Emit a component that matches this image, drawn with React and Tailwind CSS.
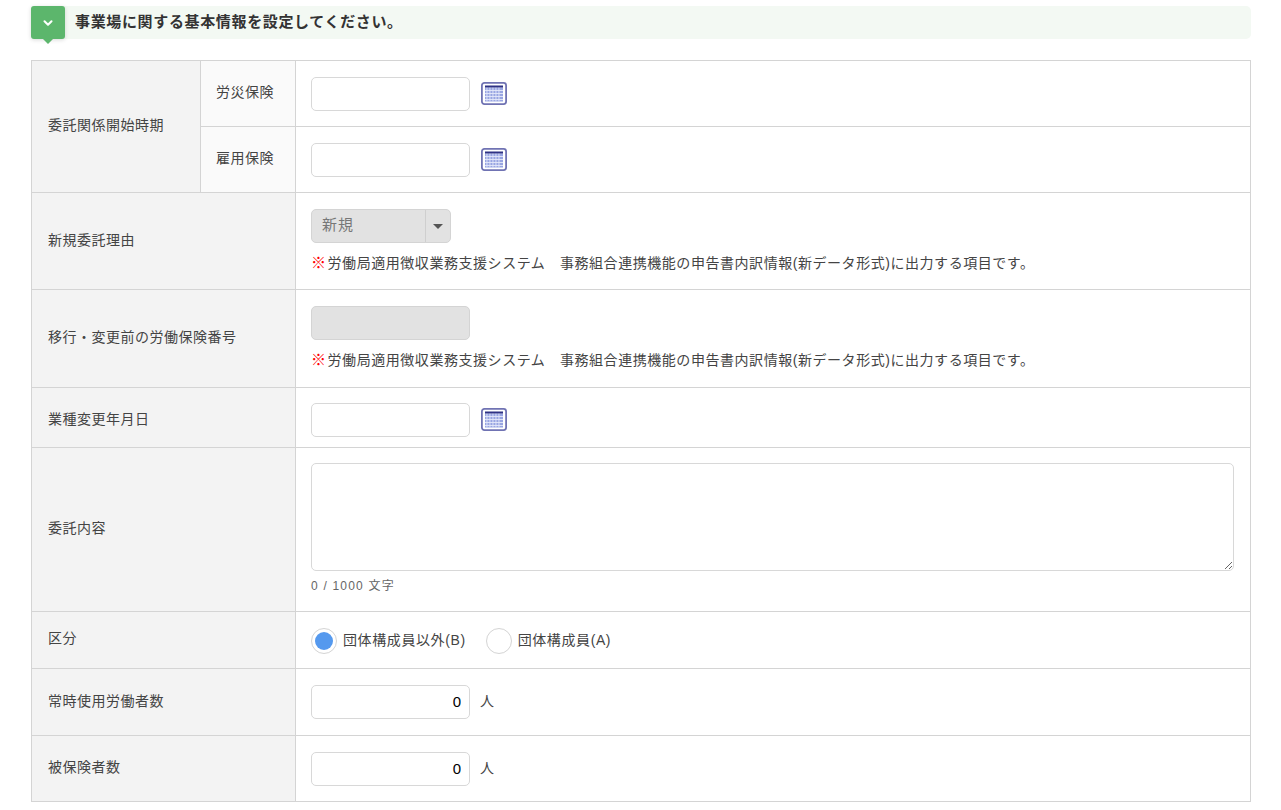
import { ChevronDown } from 'lucide-react';

const NOTE = '労働局適用徴収業務支援システム　事務組合連携機能の申告書内訳情報(新データ形式)に出力する項目です。';

function CalendarIcon() {
  const cols = [5.5, 8.5, 11.5, 14.5, 17.5];
  const rows = [8, 11, 14, 17];
  return (
    <svg width="26" height="23" viewBox="0 0 26 23" className="mb-[2px] ml-[11px] shrink-0">
      <rect x="0.9" y="0.9" width="24.2" height="21.2" rx="2.5" fill="#fff" stroke="#7073b3" strokeWidth="1.8" />
      <rect x="4" y="3.5" width="18" height="2.2" fill="#2f3284" />
      <rect x="4" y="5.7" width="18" height="13.8" fill="#98a5e2" />
      {cols.map((x) => (
        <rect key={x} x={x} y="5.7" width="0.9" height="13.8" fill="#e4e8fa" />
      ))}
      {rows.map((y) => (
        <rect key={y} x="4" y={y} width="18" height="0.9" fill="#e4e8fa" />
      ))}
    </svg>
  );
}

function DateField() {
  return (
    <div className="flex items-center">
      <input className="h-[34px] w-[159px] rounded-[5px] border border-[#d8d8d8] bg-white" />
      <CalendarIcon />
    </div>
  );
}

function Note() {
  return (
    <p className="mt-[10px] text-[14px] leading-[20px] tracking-[0.55px] text-[#444]">
      <span className="mr-[1px] text-[15px] font-bold text-[#f00]">※</span>
      {NOTE}
    </p>
  );
}

function Radio({ label, checked }) {
  return (
    <label className="flex items-center gap-[6px]">
      <span className="flex h-[26px] w-[26px] items-center justify-center rounded-full border border-[#d4d4d4] bg-white">
        {checked && <span className="h-[18px] w-[18px] rounded-full bg-[#5599ee]" />}
      </span>
      <span className="pb-[2px] text-[14px] tracking-[0.6px] text-[#444]">{label}</span>
    </label>
  );
}

function CountField() {
  return (
    <div className="flex items-center">
      <input
        readOnly
        value="0"
        className="h-[34px] w-[159px] rounded-[5px] border border-[#d8d8d8] bg-white pb-[2px] pr-[8px] text-right text-[15px] text-black"
      />
      <span className="mb-[2px] ml-[10px] text-[14px] text-[#444]">人</span>
    </div>
  );
}

const th = 'border border-[#d4d4d4] bg-[#f3f3f3] pb-[2px] pl-4 text-left align-middle text-[14px] font-normal tracking-[0.5px] text-[#444]';
const subTh = 'border border-[#d4d4d4] bg-[#fafafa] pb-[2px] pl-[15px] text-left align-middle text-[14px] font-normal tracking-[0.5px] text-[#444]';
const td = 'border border-[#d4d4d4] bg-white pl-[15px] pr-4 pt-4 align-top';

export default function App() {
  return (
    <div
      className="h-[810px] overflow-hidden bg-white px-[31px] pt-[6px]"
      style={{ fontFamily: '"Liberation Sans", "Noto Sans CJK JP", sans-serif' }}
    >
      {/* banner */}
      <div className="flex h-[33px] w-[1220px] items-center rounded-[5px] bg-[#f3f9f3]">
        <div className="relative flex h-[33px] w-[34px] shrink-0 items-center justify-center rounded-[3px] bg-[#5cb66c] shadow-[0_1px_4px_rgba(0,0,0,0.15)]">
          <ChevronDown size={14} strokeWidth={3.5} className="text-white" />
          <span className="absolute left-[12px] top-[33px] h-0 w-0 border-x-[5px] border-t-[5px] border-x-transparent border-t-[#5cb66c]" />
        </div>
        <h2 className="ml-[10px] text-[15px] font-bold tracking-[0.65px] text-[#333]">事業場に関する基本情報を設定してください。</h2>
      </div>

      {/* form table */}
      <table className="mt-[21px] w-[1220px] table-fixed border-collapse">
        <colgroup>
          <col className="w-[169px]" />
          <col className="w-[95px]" />
          <col />
        </colgroup>
        <tbody>
          <tr className="h-[66px]">
            <th rowSpan={2} className={th}>委託関係開始時期</th>
            <th className={subTh}>労災保険</th>
            <td className={td}><DateField /></td>
          </tr>
          <tr className="h-[66px]">
            <th className={subTh}>雇用保険</th>
            <td className={td}><DateField /></td>
          </tr>
          <tr className="h-[97px]">
            <th colSpan={2} className={th}>新規委託理由</th>
            <td className={td}>
              <div className="flex h-[34px] w-[140px] items-center rounded-[5px] border border-[#d4d4d4] bg-[#e2e2e2]">
                <span className="flex-1 pb-[2px] pl-[10px] text-[15px] tracking-[1px] text-[#777]">新規</span>
                <span className="flex h-full w-[25px] items-center justify-center border-l border-[#cfcfcf]">
                  <span className="h-0 w-0 border-x-[5px] border-t-[5px] border-x-transparent border-t-[#555]" />
                </span>
              </div>
              <Note />
            </td>
          </tr>
          <tr className="h-[98px]">
            <th colSpan={2} className={th}>移行・変更前の労働保険番号</th>
            <td className={td}>
              <input disabled className="block h-[34px] w-[159px] rounded-[5px] border border-[#d4d4d4] bg-[#e2e2e2]" />
              <Note />
            </td>
          </tr>
          <tr className="h-[60px]">
            <th colSpan={2} className={`${th} !pb-0 !pt-[3px]`}>業種変更年月日</th>
            <td className={`${td} !pt-[15px]`}><DateField /></td>
          </tr>
          <tr className="h-[164px]">
            <th colSpan={2} className={th}>委託内容</th>
            <td className={`${td} !pt-[15px]`}>
              <textarea className="block h-[108px] w-[923px] rounded-[5px] border border-[#d8d8d8] bg-white" />
              <p className="mt-[7px] text-[12px] leading-[16px] tracking-[1.2px] text-[#666]">0 / 1000 文字</p>
            </td>
          </tr>
          <tr className="h-[57px]">
            <th colSpan={2} className={`${th} !pb-[4px]`}>区分</th>
            <td className={td}>
              <div className="flex items-center gap-[20px]">
                <Radio label="団体構成員以外(B)" checked />
                <Radio label="団体構成員(A)" />
              </div>
            </td>
          </tr>
          <tr className="h-[67px]">
            <th colSpan={2} className={th}>常時使用労働者数</th>
            <td className={td}><CountField /></td>
          </tr>
          <tr className="h-[66px]">
            <th colSpan={2} className={th}>被保険者数</th>
            <td className={td}><CountField /></td>
          </tr>
        </tbody>
      </table>
    </div>
  );
}
